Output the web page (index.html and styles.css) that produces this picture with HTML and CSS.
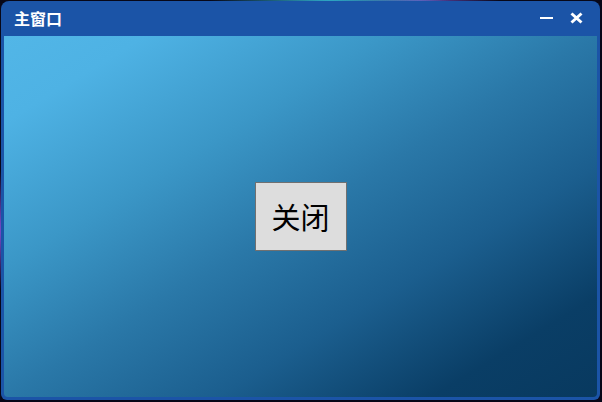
FILE: index.html
```html
<!DOCTYPE html>
<html lang="zh">
<head>
<meta charset="utf-8">
<title>主窗口</title>
<link rel="stylesheet" href="styles.css">
</head>
<body>
<div class="window">
  <div class="titlebar">
    <span class="title">主窗口</span>
    <div class="controls">
      <span class="btn-min" aria-label="最小化">
        <svg width="14" height="4" viewBox="0 0 14 4"><rect x="0" y="1" width="13" height="2" fill="#fff"/></svg>
      </span>
      <span class="btn-close" aria-label="关闭">
        <svg width="13" height="12" viewBox="0 0 13 12"><path d="M1.5 1.5 L11.5 10.5 M11.5 1.5 L1.5 10.5" stroke="#fff" stroke-width="3" stroke-linecap="butt"/></svg>
      </span>
    </div>
  </div>
  <div class="content">
    <button class="close-button">关闭</button>
  </div>
</div>
</body>
</html>
```
FILE: styles.css
```css
html, body {
  margin: 0;
  padding: 0;
  width: 602px;
  height: 402px;
  overflow: hidden;
}
body {
  background:
    radial-gradient(ellipse 120px 6px at 330px 0, rgba(60, 220, 255, 0.8), transparent),
    radial-gradient(ellipse 80px 6px at 420px 0, rgba(130, 90, 220, 0.8), transparent),
    radial-gradient(ellipse 4px 60px at 0 230px, rgba(140, 90, 240, 0.9), transparent),
    #070718;
  font-family: "Noto Sans CJK SC", "Noto Sans", sans-serif;
}
.window {
  margin: 1px 0 0 1px;
  width: 599px;
  height: 399px;
  background: #1b54a7;
  border-radius: 8px 8px 6px 6px;
  display: flex;
  flex-direction: column;
  padding: 0 3px 3px 3px;
  box-sizing: border-box;
}
.titlebar {
  height: 35px;
  flex: none;
  display: flex;
  align-items: center;
  justify-content: space-between;
  color: #fff;
}
.title {
  font-size: 16px;
  font-weight: bold;
  padding-left: 10px;
  line-height: 1;
  margin-top: -2px;
}
.controls {
  display: flex;
  align-items: center;
  gap: 16px;
  padding-right: 14px;
  margin-top: -2px;
}
.btn-min, .btn-close {
  display: flex;
  align-items: center;
}
.btn-min svg { margin-top: 1px; }
.content {
  flex: 1;
  background: linear-gradient(to bottom right, #52b6e7 0%, #4eb2e4 12%, #3b97c7 32%, #2a78a8 50%, #1b5e8e 68%, #0a3e66 86%, #08395f 100%);
  display: flex;
  align-items: center;
  justify-content: center;
  border-radius: 0 0 4px 4px;
}
.close-button {
  width: 92px;
  height: 69px;
  background: #dddddd;
  border: 1px solid #707070;
  margin: 0;
  padding: 0;
  font-family: "Noto Sans CJK SC", "Noto Sans", sans-serif;
  font-size: 29px;
  color: #000;
  line-height: 1;
}
```
